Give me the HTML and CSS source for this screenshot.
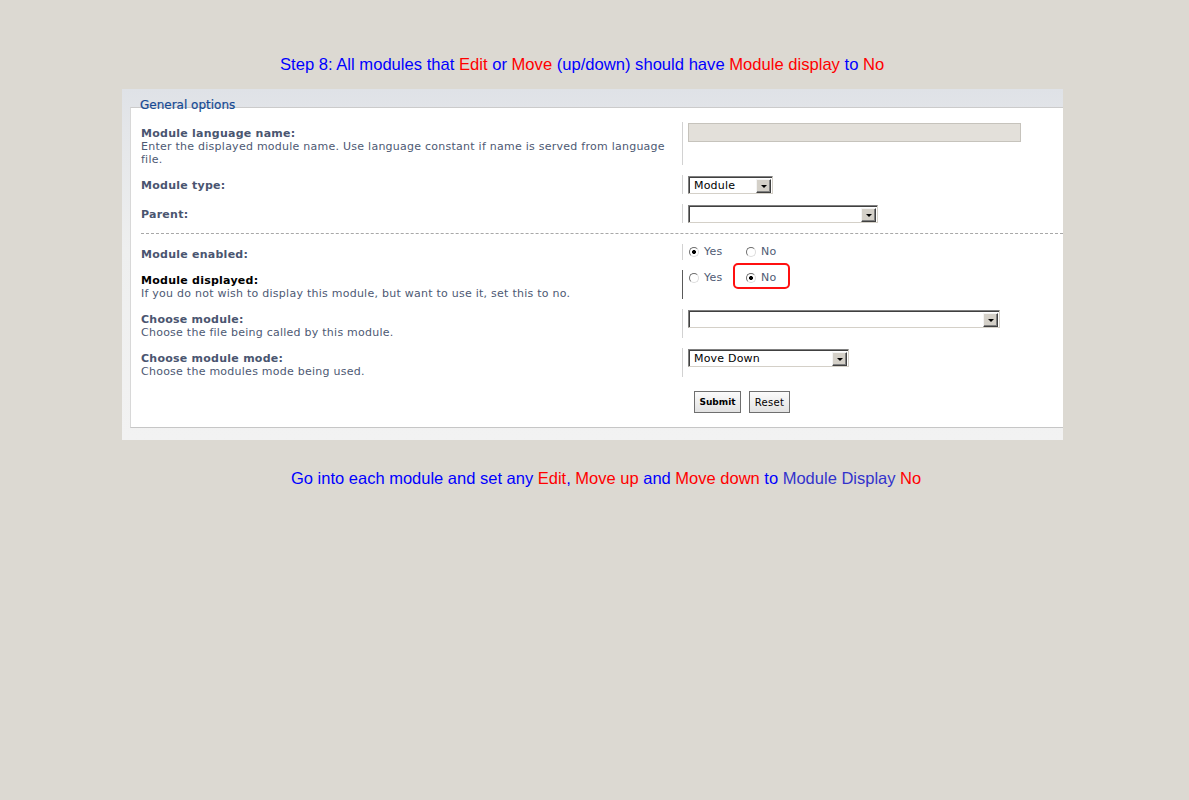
FILE: index.html
```html
<!DOCTYPE html>
<html>
<head>
<meta charset="utf-8">
<title>Step 8</title>
<link rel="stylesheet" href="styles.css">
</head>
<body>
<p class="note note-top"><span class="b">Step 8: All modules that </span><span class="r">Edit</span><span class="b"> or </span><span class="r">Move</span><span class="b"> (up/down) should have </span><span class="r">Module display</span><span class="b"> to </span><span class="r">No</span></p>

<div class="panel">
  <div class="fieldset">
    <div class="legend">General options</div>

    <div class="row r1">
      <div class="lcell">
        <div class="lbl">Module language name:</div>
        <div class="desc">Enter the displayed module name. Use language constant if name is served from language file.</div>
      </div>
      <div class="rcell"><span class="input"></span></div>
    </div>

    <div class="row">
      <div class="lcell"><div class="lbl">Module type:</div></div>
      <div class="rcell"><span class="sel w85"><span class="val">Module</span><span class="arrow"></span></span></div>
    </div>

    <div class="row">
      <div class="lcell"><div class="lbl">Parent:</div></div>
      <div class="rcell"><span class="sel w190"><span class="val"></span><span class="arrow"></span></span></div>
    </div>

    <div class="sep"></div>

    <div class="row">
      <div class="lcell"><div class="lbl">Module enabled:</div></div>
      <div class="rcell">
        <div class="radios">
          <span class="opt first"><span class="rad on"></span><span class="otext">Yes</span></span>
          <span class="opt"><span class="rad"></span><span class="otext">No</span></span>
        </div>
      </div>
    </div>

    <div class="row">
      <div class="lcell">
        <div class="lbl dark">Module displayed:</div>
        <div class="desc">If you do not wish to display this module, but want to use it, set this to no.</div>
      </div>
      <div class="rcell dark">
        <div class="radios">
          <span class="opt first"><span class="rad"></span><span class="otext">Yes</span></span>
          <span class="opt marked"><span class="rad on"></span><span class="otext">No</span></span>
        </div>
      </div>
    </div>

    <div class="row">
      <div class="lcell">
        <div class="lbl">Choose module:</div>
        <div class="desc">Choose the file being called by this module.</div>
      </div>
      <div class="rcell"><span class="sel w312"><span class="val"></span><span class="arrow"></span></span></div>
    </div>

    <div class="row">
      <div class="lcell">
        <div class="lbl">Choose module mode:</div>
        <div class="desc">Choose the modules mode being used.</div>
      </div>
      <div class="rcell"><span class="sel w161"><span class="val">Move Down</span><span class="arrow"></span></span></div>
    </div>

    <div class="buttons">
      <button class="btn submit" type="button">Submit</button>
      <button class="btn reset" type="button">Reset</button>
    </div>
  </div>
</div>

<p class="note note-bottom"><span class="b">Go into each module and set any </span><span class="r">Edit</span><span class="b">, </span><span class="r">Move up</span><span class="b"> and </span><span class="r">Move down</span><span class="b"> to </span><span class="p">Module Display</span><span class="r"> No</span></p>
</body>
</html>
```

FILE: styles.css
```css
html, body {
  margin: 0;
  padding: 0;
}

body {
  background: #dcd9d2;
  font-family: "Liberation Sans", Arial, sans-serif;
  height: 800px;
}

.note {
  margin: 0;
  font-size: 16.6px;
  line-height: 18px;
  white-space: nowrap;
}

.note .b { color: #0000ff; }
.note .r { color: #ff0000; }
.note .p { color: #3333cc; }

.note-top {
  padding: 56px 0 0 280px;
  margin-bottom: 15px;
}

.note-bottom {
  padding-left: 291px;
  margin-top: 29px;
  font-size: 16.5px;
}

.panel {
  margin-left: 122px;
  width: 941px;
  box-sizing: border-box;
  padding: 18px 0 12px 8px;
  background: linear-gradient(to bottom, #dfe2e7 0, #e4e6e9 40px, #eeefef 160px, #f2f2f2 100%);
}

.fieldset {
  background: #fff;
  border-top: 1px solid #cbcbcb;
  border-left: 1px solid #d8d8d8;
  border-bottom: 1px solid #c6c6c6;
  padding: 0 0 14px 10px;
  font-family: "DejaVu Sans", Verdana, sans-serif;
  font-size: 11px;
  letter-spacing: 0.25px;
}

.legend {
  margin: -10px 0 0 -1px;
  font-size: 12px;
  line-height: 14px;
  color: #164a94;
  letter-spacing: 0;
  -webkit-text-stroke: 0.2px #164a94;
}

.row {
  display: grid;
  grid-template-columns: 541px 1fr;
  margin-top: 10px;
}

.lcell {
  padding-top: 4px;
  margin-bottom: -1px;
}

.r1 .lcell {
  padding-top: 5px;
  margin-bottom: -1px;
}

.lbl {
  font-weight: bold;
  line-height: 13px;
  color: #4a5570;
}

.lbl.dark {
  color: #000;
}

.desc {
  line-height: 13px;
  color: #4d5973;
  padding-right: 10px;
}

.rcell {
  border-left: 1px solid #d2d2d2;
  padding: 1px 0 0 5px;
}

.rcell.dark {
  border-left-color: #5a5a5a;
}

.input {
  display: block;
  width: 333px;
  height: 19px;
  box-sizing: border-box;
  background: #e3e0da;
  border: 1px solid #c6c3bc;
}

.sel {
  display: flex;
  align-items: center;
  box-sizing: border-box;
  height: 18px;
  background: #fff;
  border: 1px solid;
  border-color: #808080 #d4d0c8 #d4d0c8 #808080;
  box-shadow: inset 1px 1px 0 #404040;
  color: #000;
  letter-spacing: 0.2px;
}

.w85 { width: 85px; }
.w190 { width: 190px; }
.w312 { width: 312px; }
.w161 { width: 161px; }

.sel .val {
  flex: 1;
  padding: 1px 0 0 5px;
  line-height: 14px;
  white-space: nowrap;
  overflow: hidden;
}

.sel .arrow {
  display: flex;
  align-items: center;
  justify-content: center;
  box-sizing: border-box;
  width: 15px;
  height: 14px;
  margin: 1px 1px 0 0;
  background: #d4d0c8;
  border: 1px solid;
  border-color: #f4f4f4 #404040 #404040 #f4f4f4;
  box-shadow: inset -1px -1px 0 #808080;
}

.sel .arrow::after {
  content: "";
  width: 0;
  height: 0;
  border-left: 3px solid transparent;
  border-right: 3px solid transparent;
  border-top: 3px solid #000;
  margin-top: 1px;
}

.sep {
  border-top: 1px dashed #a8a8a8;
  margin-top: 10px;
}

.radios {
  display: flex;
  align-items: center;
  height: 13px;
}

.opt {
  display: inline-flex;
  align-items: center;
  gap: 5px;
  color: #4f5b74;
  line-height: 13px;
}

.opt.first {
  width: 57px;
}

.opt .rad {
  display: inline-block;
  box-sizing: border-box;
  width: 10px;
  height: 10px;
  margin-left: 1px;
  border-radius: 50%;
  border: 1px solid;
  border-color: #6d6d6d #dcdcdc #dcdcdc #6d6d6d;
  background: #fff;
}

.opt .rad.on {
  background: radial-gradient(circle, #000 0, #000 1.6px, #fff 2.3px);
}

.opt.marked {
  position: relative;
}

.opt.marked::before {
  content: "";
  position: absolute;
  left: -12px;
  top: -8px;
  width: 57px;
  height: 26px;
  box-sizing: border-box;
  border: 2px solid #ff1010;
  border-radius: 5px;
}

.buttons {
  display: flex;
  gap: 8px;
  padding-left: 553px;
  margin-top: 14px;
}

.btn {
  box-sizing: border-box;
  height: 22px;
  padding: 0;
  margin: 0;
  border: 1px solid #6f6f6f;
  background: linear-gradient(to bottom, #fbfbfb, #e2e2e2);
  color: #000;
  font-family: "DejaVu Sans", Verdana, sans-serif;
  letter-spacing: 0;
}

.btn.submit {
  width: 47px;
  font-size: 9px;
  font-weight: bold;
}

.btn.reset {
  width: 41px;
  font-size: 10px;
  letter-spacing: 0.3px;
}
```
